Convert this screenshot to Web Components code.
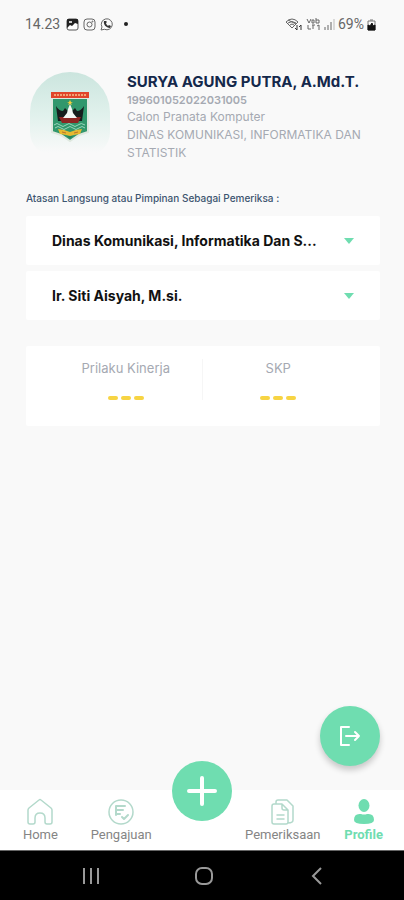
<!DOCTYPE html>
<html lang="id">
<head>
<meta charset="utf-8">
<meta name="viewport" content="width=device-width, initial-scale=1">
<title>Profile</title>
<style>
  html, body {
    margin: 0;
    background: #f9f9f9;
    font-family: Inter, "Liberation Sans", sans-serif;
  }
</style>
</head>
<body>
<profile-page></profile-page>

<script>
/**
 * Creates a template element from markup.
 *
 * @param {string} html - The markup.
 * @returns {HTMLTemplateElement} The template.
 */
const createTemplate = (html) => {
  const template = document.createElement('template')
  template.innerHTML = html
  return template
}

/**
 * Base class that clones the template of the subclass into a shadow root.
 */
class BaseElement extends HTMLElement {
  /**
   * Creates an instance of the current type.
   */
  constructor () {
    super()
    this.attachShadow({ mode: 'open' })
    this.shadowRoot.appendChild(this.constructor.template.content.cloneNode(true))
  }
}

/*
 * The status bar of the phone.
 */
customElements.define('status-bar', class extends BaseElement {
  static template = createTemplate(`
<style>
  :host {
    display: flex;
    justify-content: space-between;
    align-items: center;
    height: 48px;
    padding: 0 28px 0 25px;
    box-sizing: border-box;
    font: 14px/20px Roboto, sans-serif;
    color: #666;
  }
  .group { display: flex; align-items: center; gap: 4px; }
  .right { gap: 3px; }
  .time { margin-right: 2px; }
  .dot { width: 4px; height: 4px; margin-left: 6px; border-radius: 50%; background: #222; }
  svg { display: block; fill: none; stroke: #666; }
</style>
<div class="group">
  <span class="time">14.23</span>
  <svg width="13" height="13" viewBox="0 0 13 13"><rect x="1" y="1" width="11" height="11" rx="2" fill="#fff" stroke="#555"/><path d="M1 2q0-1 1-1h9q1 0 1 1v4L9 5 6 8 4 7 1 10z" fill="#222" stroke="none"/><path d="M3 3h3v2H3z" fill="#ccc" stroke="none"/></svg>
  <svg width="13" height="13" viewBox="0 0 13 13"><rect x="1" y="1" width="11" height="11" rx="3"/><circle cx="6.500" cy="6.500" r="2.500"/><circle cx="9.500" cy="3.500" r=".5"/></svg>
  <svg width="14" height="13" viewBox="0 0 14 13"><path d="M1 12l1-3a5.500 5.500 0 1 1 2.500 2.300z"/><path d="M4 3c-1 3 2 7 6 7l1-2-2-1-1 1C7 7 6 6 6 5l1-1-1-1z" fill="#333" stroke="none"/></svg>
  <span class="dot"></span>
</div>
<div class="group right">
  <svg width="18" height="14" viewBox="0 0 18 14"><path d="M1 5q6-6 12 0L7 11zM3 6q4-3 8 0M5 8q2-2 4 0M3 3l8 4"/><path d="M12 8v5m-2-2l2 2M16 13V8m-2 2l2-2" stroke="#333"/></svg>
  <svg width="15" height="14" viewBox="0 0 15 14"><path d="M1 2l2 4 2-4M6 3v3h2V3H6M10 1v5m0-3h3v3h-3M2 8v4h3M6 8h3M7 8v4M11 9l2-1v5"/></svg>
  <svg width="11" height="13" viewBox="0 0 11 13"><path d="M1 9v3M4 7v5M7 4v8"/><path d="M10 1v11" stroke="#bbb"/></svg>
  <span>69%</span>
  <svg width="9" height="13" viewBox="0 0 9 13"><path d="M1 3h7v9H1zM3 2h3" stroke="#777"/><path d="M1 7l2 1 2-3 1 3 2-1v5H1z" fill="#111" stroke="#111"/></svg>
</div>
`)
})

/*
 * Round picture holding the crest of the province.
 */
customElements.define('crest-avatar', class extends BaseElement {
  static template = createTemplate(`
<style>
  :host {
    display: flex;
    justify-content: center;
    width: 80px;
    height: 84px;
    padding-top: 20px;
    box-sizing: border-box;
    border-radius: 40px 40px 24px 24px;
    background: linear-gradient(#cbe5de, #e0f1ec 50%, #f9f9f9 96%);
  }
  svg { display: block; }
</style>
<svg width="38" height="50" viewBox="0 0 38 50" role="img" aria-label="Lambang Sumatera Barat">
  <path d="M1 6h36v34l-9 3-9 6-9-6-9-3z" fill="#31976c" stroke="#dfe8df" stroke-width="2"/>
  <path d="M0 0h38v6H0z" fill="#e1452a"/>
  <path d="M3 3h32" stroke="#f1a273" stroke-width="2" stroke-dasharray="2 1"/>
  <path d="M5 14q3 5 7 5l2-3 3 3h4l3-3 2 3q4 0 7-5l-2 15H7z" fill="#171d1d"/>
  <path d="M8 25h22l-3 6H11z" fill="#8d2523"/>
  <path d="M19 12l2 5 1 4 4 5H12l4-5 1-4z" fill="#f4f7f5"/>
  <path d="M19 8l1 2h2l-2 1 1 2-2-1-2 1 1-2-2-1h2z" fill="#f3cf3c"/>
  <path d="M3 33q3-3 6 0t6 0 6 0 6 0 7 0M4 36q3-3 6 0t6 0 6 0 6 0 6 0" fill="none" stroke="#9ad5bb"/>
  <path d="M7 37l6 1 6 2 6-2 6-1-2 5-6 1-4 1-4-1-6-1z" fill="#e6b930"/>
  <path d="M11 40l4 1m8 0l4-1" stroke="#b9742c"/>
  <path d="M16 44l3 3 3-3z" fill="#26845d"/>
</svg>
`)
})

/*
 * Drop-down on a white card.
 */
customElements.define('select-card', class extends BaseElement {
  static template = createTemplate(`
<style>
  :host { display: block; }
  .card {
    display: flex;
    align-items: center;
    padding-right: 26px;
    background: #fff;
    border-radius: 2px;
  }
  select {
    flex: 1;
    min-width: 0;
    height: 49px;
    margin: 0;
    padding: 0 16px 0 26px;
    border: 0;
    appearance: none;
    background: none;
    color: #111;
    font: 700 14px/20px Inter, sans-serif;
    text-overflow: ellipsis;
    white-space: nowrap;
    overflow: hidden;
  }
  svg { display: block; fill: #6fddb0; pointer-events: none; }
</style>
<div class="card">
  <select><option></option></select>
  <svg width="10" height="6" viewBox="0 0 10 6"><path d="M0 0h10L5 6z"/></svg>
</div>
`)

  /**
   * Called after the element is inserted into the DOM.
   */
  connectedCallback () {
    this.shadowRoot.querySelector('select').setAttribute('aria-label', this.getAttribute('label'))
    this.shadowRoot.querySelector('option').textContent = this.getAttribute('value')
  }
})

/*
 * One score, with a title and three dashes while it has no value.
 */
customElements.define('score-item', class extends BaseElement {
  static template = createTemplate(`
<style>
  :host {
    display: flex;
    flex-direction: column;
    align-items: center;
    gap: 19px;
    font-size: 13px;
    line-height: 18px;
    color: #a5a9b2;
  }
  .dashes { display: flex; gap: 3px; }
  .dashes i { width: 10px; height: 4px; border-radius: 2px; background: #f7d443; }
</style>
<span><slot></slot></span>
<div class="dashes"><i></i><i></i><i></i></div>
`)
})

/*
 * Round green button.
 */
customElements.define('round-button', class extends BaseElement {
  static template = createTemplate(`
<style>
  :host { display: block; }
  button {
    display: flex;
    align-items: center;
    justify-content: center;
    width: 60px;
    height: 60px;
    padding: 0;
    border: 0;
    border-radius: 50%;
    background: #6fddb0;
    color: #fff;
  }
  :host([raised]) button { box-shadow: 0 4px 6px rgba(0, 0, 0, .2); }
</style>
<button type="button"><slot></slot></button>
`)

  /**
   * Called after the element is inserted into the DOM.
   */
  connectedCallback () {
    this.shadowRoot.querySelector('button').setAttribute('aria-label', this.getAttribute('label'))
  }
})

/*
 * Link of the bottom navigation.
 */
customElements.define('nav-item', class extends BaseElement {
  static template = createTemplate(`
<style>
  :host { display: block; flex: 1 1 0; min-width: 0; }
  a {
    display: flex;
    flex-direction: column;
    align-items: center;
    gap: 1px;
    padding-top: 8px;
    color: #858585;
    font: 13px/16px Roboto, sans-serif;
    text-decoration: none;
    white-space: nowrap;
  }
  :host([active]) a { color: #6fddb0; font-weight: 700; }
</style>
<a href="#"><slot name="icon"></slot><slot></slot></a>
`)
})

/*
 * Bottom navigation with the add button over its top edge.
 */
customElements.define('bottom-nav', class extends BaseElement {
  static template = createTemplate(`
<style>
  :host { display: block; position: relative; background: #fff; }
  nav { display: flex; height: 60px; }
  .space { flex: 1 1 0; }
  .add { position: absolute; left: 50%; top: -29px; transform: translateX(-50%); }
  svg { display: block; fill: none; stroke: #b3d9cb; stroke-width: 1.500; stroke-linejoin: round; stroke-linecap: round; }
</style>
<nav>
  <nav-item><svg slot="icon" width="26" height="28" viewBox="0 0 26 28"><path d="M1 12q0-1 1-2L12 2q1-1 2 0l10 8q1 1 1 2v12q0 2-2 2h-3q-2 0-2-2v-4q0-5-5-5t-5 5v4q0 2-2 2H3q-2 0-2-2z"/></svg>Home</nav-item>
  <nav-item><svg slot="icon" width="26" height="28" viewBox="0 0 26 28"><circle cx="13" cy="14" r="12"/><path d="M8 8h9M8 12h7M8 16h4M8 8v9M14 19l2 2 4-4" stroke-width="2"/></svg>Pengajuan</nav-item>
  <div class="space"></div>
  <nav-item><svg slot="icon" width="24" height="28" viewBox="0 0 24 28"><path d="M3 6h8l6 6v12q0 2-2 2H3q-2 0-2-2V8q0-2 2-2zM11 6v4q0 2 2 2h4M6 17h7M6 21h7M5 6V4q0-2 2-2h9l6 6v14q0 3-5 3"/></svg>Pemeriksaan</nav-item>
  <nav-item active><svg slot="icon" width="22" height="28" viewBox="0 0 22 28"><ellipse cx="11" cy="7.500" rx="5.500" ry="6.500" fill="#6fddb0" stroke="none"/><path d="M1 22q0-7 7-6 3 1 6 0 7-1 7 6 0 4-10 4T1 22z" fill="#6fddb0" stroke="none"/></svg>Profile</nav-item>
</nav>
<round-button class="add" label="Tambah">
  <svg width="32" height="32" viewBox="0 0 32 32" style="stroke:#fff;stroke-width:4"><path d="M16 3v26M3 16h26"/></svg>
</round-button>
`)
})

/*
 * Button bar of the phone.
 */
customElements.define('system-bar', class extends BaseElement {
  static template = createTemplate(`
<style>
  :host { display: block; background: #000; border-top: 1px solid #666; }
  div { display: flex; justify-content: space-around; align-items: center; height: 49px; padding: 0 30px 0 34px; }
  button { display: flex; justify-content: center; width: 40px; padding: 0; border: 0; background: none; }
  svg { display: block; fill: none; stroke: #999; stroke-width: 2; }
</style>
<div>
  <button type="button" aria-label="Aplikasi terbaru"><svg width="18" height="18" viewBox="0 0 18 18"><path d="M2 1v16M9 1v16M16 1v16"/></svg></button>
  <button type="button" aria-label="Beranda"><svg width="18" height="18" viewBox="0 0 18 18"><rect x="1" y="1" width="16" height="16" rx="6"/></svg></button>
  <button type="button" aria-label="Kembali"><svg width="18" height="18" viewBox="0 0 18 18"><path d="M13 1L5 9l8 8"/></svg></button>
</div>
`)
})

/*
 * The whole profile page.
 */
customElements.define('profile-page', class extends BaseElement {
  static template = createTemplate(`
<style>
  :host { display: flex; flex-direction: column; min-height: 100vh; }
  main { flex: 1; display: flex; flex-direction: column; padding: 24px 24px; padding-left: 26px; }
  header { display: flex; gap: 17px; padding-left: 4px; color: #a5a9b2; font-size: 12px; line-height: 18px; }
  crest-avatar { flex: none; }
  h1 { margin: 0; color: #14284b; font-size: 15px; line-height: 20px; font-weight: 700; white-space: nowrap; }
  p { margin: 0; }
  .nip { font-size: 11px; line-height: 16px; font-weight: 600; }
  h2 { margin: 28px 0 10px; color: #3d5570; font-size: 10px; line-height: 16px; font-weight: 500; }
  .fields { display: flex; flex-direction: column; gap: 6px; }
  .scores { display: flex; align-items: flex-start; margin-top: 26px; padding: 13px 0 26px; background: #fff; border-radius: 2px; }
  .scores score-item { flex: 1; }
  .scores .first { padding-left: 24px; }
  .scores .last { padding-right: 26px; }
  .line { align-self: stretch; width: 1px; background: #f6f6f6; }
  .logout { margin: auto 0 0 auto; }
  .logout svg { display: block; fill: none; stroke: #fff; stroke-width: 2; stroke-linejoin: round; stroke-linecap: round; }
</style>
<status-bar></status-bar>
<main>
  <header>
    <crest-avatar></crest-avatar>
    <div>
      <h1>SURYA AGUNG PUTRA, A.Md.T.</h1>
      <p class="nip">199601052022031005</p>
      <p>Calon Pranata Komputer</p>
      <p>DINAS KOMUNIKASI, INFORMATIKA DAN STATISTIK</p>
    </div>
  </header>
  <h2>Atasan Langsung atau Pimpinan Sebagai Pemeriksa :</h2>
  <div class="fields">
    <select-card label="Instansi" value="Dinas Komunikasi, Informatika Dan S..."></select-card>
    <select-card label="Pemeriksa" value="Ir. Siti Aisyah, M.si."></select-card>
  </div>
  <section class="scores">
    <score-item class="first">Prilaku Kinerja</score-item>
    <div class="line"></div>
    <score-item class="last">SKP</score-item>
  </section>
  <round-button class="logout" raised label="Keluar">
    <svg width="24" height="24" viewBox="0 0 24 24"><path d="M11 3H3v18h8M8 12h13M17 8l4 4-4 4"/></svg>
  </round-button>
</main>
<bottom-nav></bottom-nav>
<system-bar></system-bar>
`)
})
</script>
</body>
</html>
